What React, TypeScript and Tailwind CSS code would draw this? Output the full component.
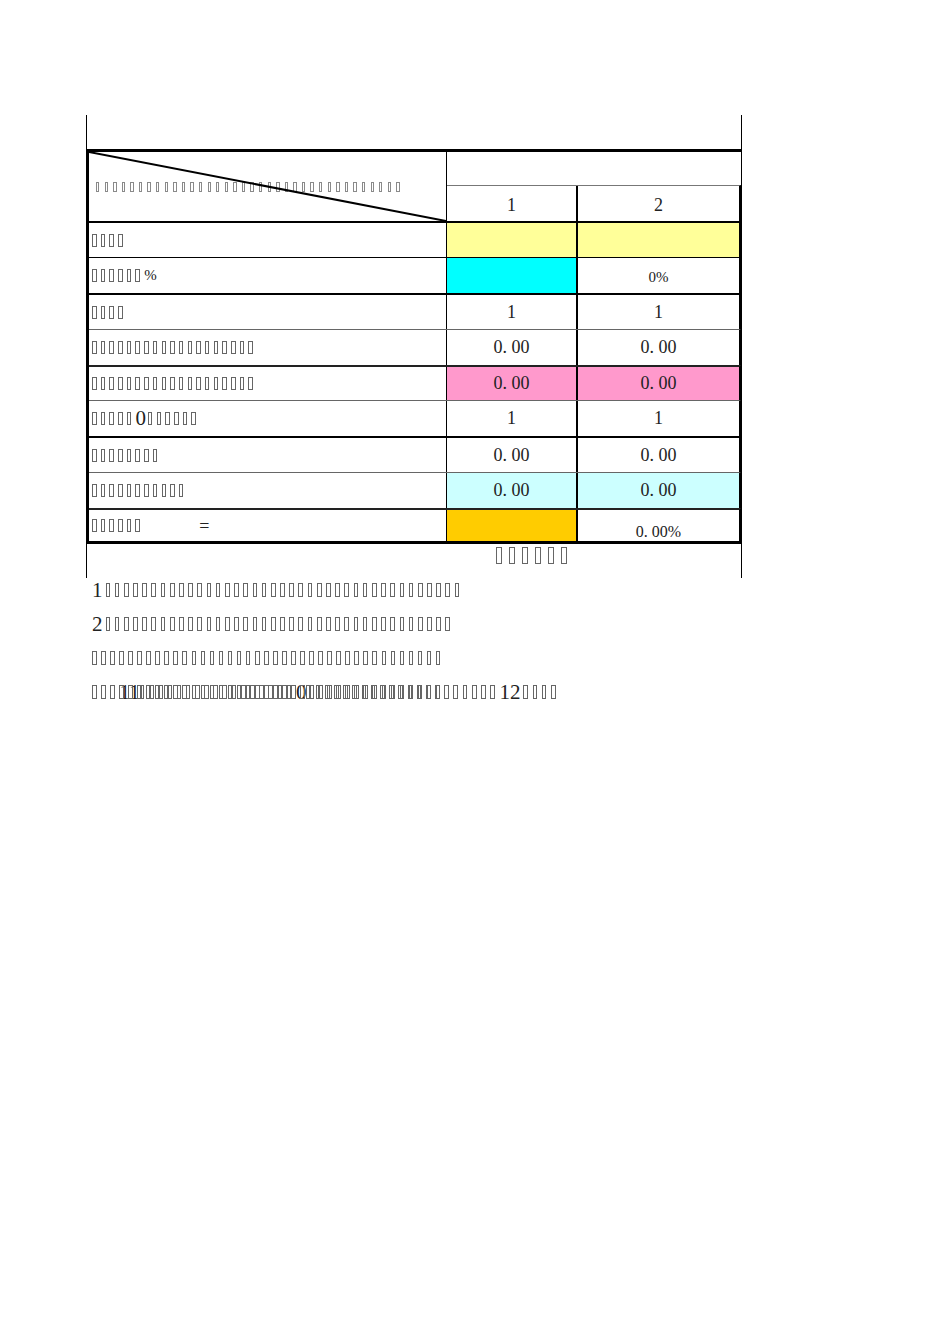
import React from "react";

const LBL = "inline-block shrink-0 w-[4.5px] h-[13px] border border-[#666] mr-[4.2px]";
const HDR = "inline-block shrink-0 w-[3.4px] h-[10px] border border-[#8a8a8a] mr-[5.2px]";
const FT = "inline-block shrink-0 w-[4.7px] h-[14.7px] border border-[#666] mr-[4.5px]";
const FT3 = "inline-block shrink-0 w-[4.7px] h-[14.7px] border border-[#666] mr-[4.37px]";
const BIG = "inline-block shrink-0 w-[6px] h-[17px] border border-[#666] mr-[7.1px]";

function boxes(n: number, cls: string) {
  return Array.from({ length: n }, (_, i) => <span key={i} className={cls} />);
}

type Row = {
  label: React.ReactNode;
  c1: string;
  c2: string;
  bg1?: string;
  bg2?: string;
  top: string;
  h: string;
  c2cls?: string;
};

const rows: Row[] = [
  { label: <>{boxes(4, LBL)}</>, c1: "", c2: "", bg1: "bg-[#ffff99]", bg2: "bg-[#ffff99]", top: "border-t-2 border-t-black", h: "h-[36px]" },
  {
    label: (
      <>
        {boxes(6, LBL)}
        <span className="text-[15px] leading-none">%</span>
      </>
    ),
    c1: "",
    c2: "0%",
    bg1: "bg-[#00ffff]",
    top: "border-t border-t-black",
    h: "h-[36px]",
    c2cls: "text-[15px] pt-[4px]",
  },
  { label: <>{boxes(4, LBL)}</>, c1: "1", c2: "1", top: "border-t-2 border-t-black", h: "h-[36px]" },
  { label: <>{boxes(19, LBL)}</>, c1: "0. 00", c2: "0. 00", top: "border-t border-t-[#666]", h: "h-[36px]" },
  { label: <>{boxes(19, LBL)}</>, c1: "0. 00", c2: "0. 00", bg1: "bg-[#ff99cc]", bg2: "bg-[#ff99cc]", top: "border-t-2 border-t-[#222]", h: "h-[35px]" },
  {
    label: (
      <>
        {boxes(5, LBL)}
        <span className="text-[21px] leading-none mr-[2px]">0</span>
        {boxes(6, LBL)}
      </>
    ),
    c1: "1",
    c2: "1",
    top: "border-t border-t-[#666]",
    h: "h-[36px]",
  },
  { label: <>{boxes(8, LBL)}</>, c1: "0. 00", c2: "0. 00", top: "border-t-2 border-t-black", h: "h-[36px]" },
  { label: <>{boxes(11, LBL)}</>, c1: "0. 00", c2: "0. 00", bg1: "bg-[#ccffff]", bg2: "bg-[#ccffff]", top: "border-t border-t-[#666]", h: "h-[36px]" },
  {
    label: (
      <>
        {boxes(6, LBL)}
        <span className="text-[18px] leading-none ml-[55px]">=</span>
      </>
    ),
    c1: "",
    c2: "0. 00%",
    bg1: "bg-[#ffcc00]",
    top: "border-t-2 border-t-[#222]",
    h: "h-[33px]",
    c2cls: "text-[16px] leading-none self-end pb-[1px]",
  },
];

export default function App() {
  return (
    <div className="w-[950px] h-[1344px] bg-white font-['Liberation_Serif',serif] text-[#222] overflow-hidden">
      <div className="ml-[86px] pt-[115px] w-[656px]">
        <div className="h-[463px] border-l border-r border-black pt-[34px] flex flex-col">
          {/* table */}
          <div className="border-t-[3px] border-b-[3px] border-l-2 border-black flex flex-col">
            {/* header */}
            <div className="flex h-[69px]">
              <div className="relative w-[358px] shrink-0 border-r border-r-black flex items-center pl-[7px]">
                {boxes(36, HDR)}
                <svg
                  className="absolute inset-0 w-full h-full"
                  viewBox="0 0 357 69"
                  preserveAspectRatio="none"
                >
                  <line x1="0" y1="0" x2="357" y2="69" stroke="#000" strokeWidth="2" />
                </svg>
              </div>
              <div className="flex-1 flex flex-col">
                <div className="h-[33px]" />
                <div className="flex-1 flex border-t border-t-[#777] border-r-2 border-r-black text-[18px]">
                  <div className="w-[131px] shrink-0 border-r-2 border-r-black flex items-center justify-center pt-[4px]">
                    1
                  </div>
                  <div className="flex-1 flex items-center justify-center pt-[4px]">2</div>
                </div>
              </div>
            </div>
            {rows.map((r, i) => (
              <div key={i} className={`flex border-r-2 border-r-black ${r.top} ${r.h}`}>
                <div className="w-[358px] shrink-0 border-r border-r-black flex items-center pl-[3px]">
                  {r.label}
                </div>
                <div
                  className={`w-[131px] shrink-0 border-r-2 border-r-black flex items-center justify-center text-[18px] ${r.bg1 ?? ""}`}
                >
                  {r.c1}
                </div>
                <div className={`flex-1 flex justify-center ${r.bg2 ?? ""}`}>
                  <span className={`self-center ${r.c2cls ?? "text-[18px]"}`}>{r.c2}</span>
                </div>
              </div>
            ))}
          </div>
          {/* below table */}
          <div className="flex pl-[409px] pt-[3px]">{boxes(6, BIG)}</div>
        </div>
      </div>

      {/* footnotes */}
      <div className="ml-[92px] -mt-[5px] flex flex-col whitespace-nowrap">
        <div className="h-[34px] flex items-center">
          <span className="text-[21px] leading-none mr-[3px]">1</span>
          {boxes(39, FT)}
        </div>
        <div className="h-[34px] flex items-center">
          <span className="text-[21px] leading-none mr-[3px]">2</span>
          {boxes(38, FT)}
        </div>
        <div className="h-[34px] flex items-center">{boxes(39, FT3)}</div>
        <div className="relative h-[34px] flex items-center">
          {boxes(3, FT)}
          <span className="text-[21px] leading-none">11</span>
          {boxes(17, FT)}
          <span className="text-[21px] leading-none">0</span>
          {boxes(21, FT)}
          <span className="text-[21px] leading-none mr-[3px]">12</span>
          {boxes(4, FT)}
          <div className="absolute inset-0 flex items-center">{boxes(39, FT3)}</div>
        </div>
      </div>
    </div>
  );
}
